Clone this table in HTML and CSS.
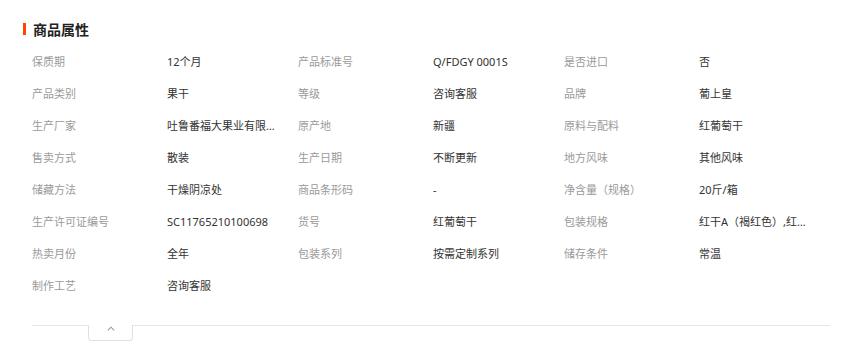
FILE: index.html
```html
<!DOCTYPE html>
<html lang="zh-CN">
<head>
<meta charset="utf-8">
<title>商品属性</title>
<link rel="stylesheet" href="styles.css">
</head>
<body>
<section class="panel">
  <h2 class="title">商品属性</h2>
  <div class="grid">
    <div class="item"><span class="label">保质期</span><span class="value">12个月</span></div>
    <div class="item"><span class="label">产品标准号</span><span class="value">Q/FDGY 0001S</span></div>
    <div class="item"><span class="label">是否进口</span><span class="value">否</span></div>

    <div class="item"><span class="label">产品类别</span><span class="value">果干</span></div>
    <div class="item"><span class="label">等级</span><span class="value">咨询客服</span></div>
    <div class="item"><span class="label">品牌</span><span class="value">葡上皇</span></div>

    <div class="item"><span class="label">生产厂家</span><span class="value">吐鲁番福大果业有限公司</span></div>
    <div class="item"><span class="label">原产地</span><span class="value">新疆</span></div>
    <div class="item"><span class="label">原料与配料</span><span class="value">红葡萄干</span></div>

    <div class="item"><span class="label">售卖方式</span><span class="value">散装</span></div>
    <div class="item"><span class="label">生产日期</span><span class="value">不断更新</span></div>
    <div class="item"><span class="label">地方风味</span><span class="value">其他风味</span></div>

    <div class="item"><span class="label">储藏方法</span><span class="value">干燥阴凉处</span></div>
    <div class="item"><span class="label">商品条形码</span><span class="value">-</span></div>
    <div class="item"><span class="label">净含量（规格）</span><span class="value">20斤/箱</span></div>

    <div class="item"><span class="label">生产许可证编号</span><span class="value">SC11765210100698</span></div>
    <div class="item"><span class="label">货号</span><span class="value">红葡萄干</span></div>
    <div class="item"><span class="label">包装规格</span><span class="value">红干A（褐红色）,红干B（褐红色）</span></div>

    <div class="item"><span class="label">热卖月份</span><span class="value">全年</span></div>
    <div class="item"><span class="label">包装系列</span><span class="value">按需定制系列</span></div>
    <div class="item"><span class="label">储存条件</span><span class="value">常温</span></div>

    <div class="item"><span class="label">制作工艺</span><span class="value">咨询客服</span></div>
  </div>
  <div class="divider">
    <button class="toggle" type="button" aria-label="收起">
      <svg width="8" height="5" viewBox="0 0 8 5"><path d="M0.8 4.3 L4 1.2 L7.2 4.3" fill="none" stroke="#999" stroke-width="1.1"/></svg>
    </button>
  </div>
</section>
</body>
</html>
```

FILE: styles.css
```css
html, body {
  margin: 0;
  padding: 0;
  background: #fff;
}
body {
  font-family: "Noto Sans", "Noto Sans CJK SC", sans-serif;
  font-size: 11px;
  color: #333;
}
.panel {
  padding: 19px 33px 0 23px;
}
.title {
  display: flex;
  align-items: center;
  gap: 7px;
  height: 20px;
  margin: 0;
  font-family: "Noto Sans CJK SC", sans-serif;
  font-size: 14px;
  font-weight: 700;
  color: #222;
}
.title::before {
  content: "";
  width: 3px;
  height: 12px;
  background: #ff4400;
}
.grid {
  display: grid;
  grid-template-columns: repeat(3, 1fr);
  margin: 7px 0 0 9px;
}
.item {
  display: flex;
  height: 32px;
  line-height: 32px;
  white-space: nowrap;
}
.label {
  width: 135px;
  flex: none;
  color: #9a9a9a;
}
.value {
  width: 112px;
  overflow: hidden;
  text-overflow: ellipsis;
  color: #333;
}
.divider {
  margin: 23px 0 0 9px;
  border-top: 1px solid #e5e5e5;
  height: 20px;
}
.toggle {
  display: flex;
  align-items: center;
  justify-content: center;
  margin: -1px 0 0 56px;
  width: 45px;
  height: 16px;
  padding: 0 0 8px;
  background: #fff;
  border: 1px solid #e0e0e0;
  border-top: none;
  border-radius: 0 0 4px 4px;
  cursor: pointer;
}
```
